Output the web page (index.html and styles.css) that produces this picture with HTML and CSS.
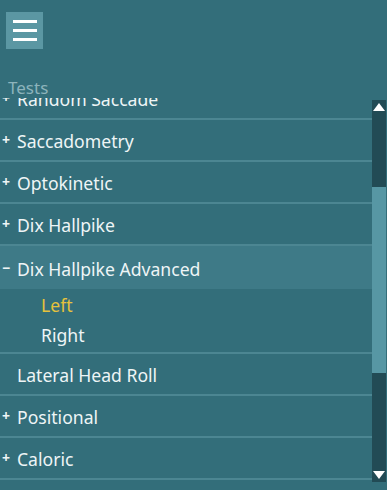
FILE: index.html
```html
<!DOCTYPE html>
<html lang="en">
<head>
    <meta charset="UTF-8">
    <meta name="viewport" content="width=device-width, initial-scale=1.0">
    <title>Tests</title>
    <link rel="stylesheet" href="styles.css">
</head>
<body>
    <div class="header">
        <button class="menu-btn" aria-label="Menu">
            <span></span><span></span><span></span>
        </button>
    </div>

    <div class="section-label">Tests</div>

    <div class="list-area">
        <div class="list-viewport">
            <ul class="test-list">
                <li class="item"><span class="sign">+</span>Random Saccade</li>
                <li class="item"><span class="sign">+</span>Saccadometry</li>
                <li class="item"><span class="sign">+</span>Optokinetic</li>
                <li class="item"><span class="sign">+</span>Dix Hallpike</li>
                <li class="item expanded"><span class="sign">&minus;</span>Dix Hallpike Advanced</li>
                <li class="sub-group">
                    <div class="sub-item active">Left</div>
                    <div class="sub-item">Right</div>
                </li>
                <li class="item"><span class="sign"></span>Lateral Head Roll</li>
                <li class="item"><span class="sign">+</span>Positional</li>
                <li class="item"><span class="sign">+</span>Caloric</li>
            </ul>
        </div>

        <div class="scrollbar">
            <div class="arrow up"></div>
            <div class="track">
                <div class="thumb"></div>
            </div>
            <div class="arrow down"></div>
        </div>
    </div>
</body>
</html>
```

FILE: styles.css
```css
* {
    box-sizing: border-box;
    font-family: 'Noto Sans', 'Open Sans', sans-serif;
}

html, body {
    margin: 0;
    padding: 0;
    height: 100%;
}

body {
    background-color: #336e7a;
    color: #eef5f6;
    overflow: hidden;
}

.header {
    padding: 12px 0 0 6px;
    height: 77px;
}

.menu-btn {
    width: 37px;
    height: 37px;
    background-color: #5b97a3;
    border: none;
    padding: 8px 6px 0 7px;
    display: flex;
    flex-direction: column;
    gap: 6px;
}

.menu-btn span {
    display: block;
    width: 24px;
    height: 3px;
    background-color: #ffffff;
}

.section-label {
    padding-left: 8px;
    font-size: 17px;
    line-height: 21px;
    height: 21px;
    color: #8db4bc;
}

.list-area {
    display: flex;
    height: 392px;
}

.list-viewport {
    flex: 1;
    overflow: hidden;
}

.test-list {
    list-style: none;
    margin: -20px 0 0 0;
    padding: 0;
}

.item {
    height: 42px;
    display: flex;
    align-items: center;
    font-size: 17.6px;
    border-bottom: 2px solid #4c8692;
    padding-top: 2px;
}

.item.expanded {
    background-color: #3e7a87;
    border-bottom: none;
    height: 43px;
}

.sign {
    width: 17px;
    padding-left: 2px;
    padding-bottom: 3px;
    font-size: 14px;
    font-weight: bold;
}

.sub-group {
    border-bottom: 2px solid #4c8692;
    padding: 1px 0 2px;
}

.sub-item {
    height: 30px;
    display: flex;
    align-items: center;
    padding-left: 41px;
    font-size: 17.6px;
}

.sub-item.active {
    color: #e6c23c;
}

.scrollbar {
    width: 14px;
    margin: 2px 1px 8px 0;
    background-color: #224b55;
    display: flex;
    flex-direction: column;
}

.arrow {
    height: 14px;
    display: flex;
    align-items: center;
    justify-content: center;
}

.arrow.up::before,
.arrow.down::before {
    content: '';
    width: 0;
    height: 0;
    border-left: 6px solid transparent;
    border-right: 6px solid transparent;
}

.arrow.up::before {
    border-bottom: 8px solid #ffffff;
}

.arrow.down::before {
    border-top: 8px solid #ffffff;
}

.track {
    flex: 1;
    padding-top: 73px;
}

.thumb {
    height: 186px;
    background-color: #5797a4;
}
```
